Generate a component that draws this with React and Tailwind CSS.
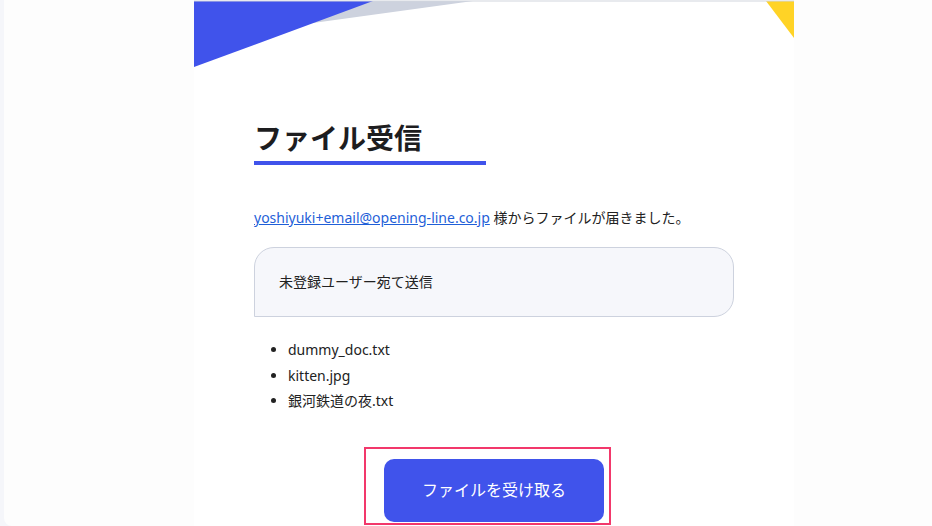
export default function App() {
  const font = { fontFamily: '"Noto Sans", "Noto Sans CJK JP", sans-serif' };
  return (
    <div className="w-[932px] h-[526px] bg-[#f5f6fa] overflow-hidden" style={font}>
      <div className="ml-[4px] h-[526px] bg-[#fdfdfd] rounded-bl-[8px] overflow-hidden">
        <div className="ml-[190px] w-[600px] h-[526px] bg-white">
          <svg width="600" height="68" viewBox="0 0 600 68" className="block">
            <polygon points="0,1 279,1 119,23" fill="#cdd2de" />
            <polygon points="0,1 179,1 0,67" fill="#4053eb" />
            <polygon points="572,1 600,1 600,38" fill="#ffd326" />
            <rect x="0" y="0.5" width="600" height="1" fill="#d2d5de" />
          </svg>
          <div className="px-[60px] pt-[52px]">
            <h1 className="w-[232px] text-[28px] leading-[36px] font-bold text-[#1d1d1f] pb-[5px] border-b-4 border-[#4053eb]">
              ファイル受信
            </h1>
            <p className="mt-[43px] text-[14px] leading-[20px] text-[#222]">
              <a href="#" className="text-[#1f5fd8] underline">yoshiyuki+email@opening-line.co.jp</a> 様からファイルが届きました。
            </p>
            <div className="mt-[19px] h-[70px] px-[24px] py-[24px] bg-[#f6f7fb] border border-[#cdd2de] rounded-tl-[20px] rounded-tr-[20px] rounded-br-[20px] text-[14px] leading-[20px] text-[#222]">
              未登録ユーザー宛て送信
            </div>
            <ul className="mt-[20px] pl-[34px] list-disc text-[14px] leading-[25.5px] text-[#222]">
              <li>dummy_doc.txt</li>
              <li>kitten.jpg</li>
              <li>銀河鉄道の夜.txt</li>
            </ul>
            <div className="mt-[33px] flex justify-center pr-[13px]">
              <div className="border-2 border-[#f2386b] pl-[18px] pr-[5px] pt-[10px] pb-[1px]">
                <button className="w-[220px] h-[63px] rounded-[10px] bg-[#4053eb] text-white text-[16px] leading-[20px]">
                  ファイルを受け取る
                </button>
              </div>
            </div>
          </div>
        </div>
      </div>
    </div>
  );
}
